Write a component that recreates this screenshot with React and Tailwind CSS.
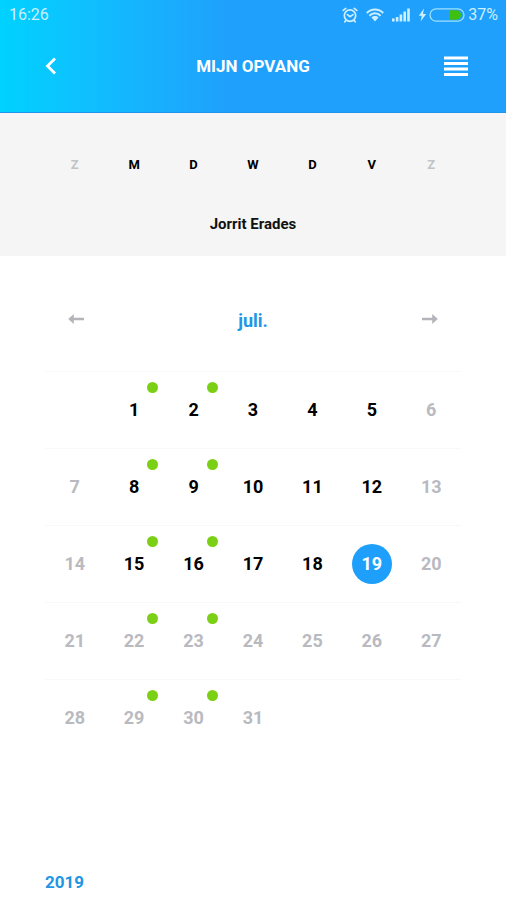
import React, { useState } from "react";

const weekDays = ["Z", "M", "D", "W", "D", "V", "Z"];

const weeks = [
  [null, 1, 2, 3, 4, 5, 6],
  [7, 8, 9, 10, 11, 12, 13],
  [14, 15, 16, 17, 18, 19, 20],
  [21, 22, 23, 24, 25, 26, 27],
  [28, 29, 30, 31, null, null, null],
];

const careDays = [1, 2, 8, 9, 15, 16, 22, 23, 29, 30];
const lastOpenDay = 19;

const StatusBar = () => {
  return (
    <div className="flex h-[30px] items-center justify-between pr-2 pl-[9px] text-[16px] leading-[30px] text-[#cdefff]">
      <span>16:26</span>
      <div className="flex items-center">
        {/* alarm */}
        <svg className="mr-[8px]" width="16" height="16" viewBox="0 0 16 16" fill="none" stroke="currentColor" strokeWidth="1.7" strokeLinecap="round">
          <circle cx="8" cy="8.6" r="5.7" />
          <path d="M1.200 3.400 3.800 1.400M14.800 3.400 12.200 1.400M5.400 7.600 8 9.600l3-2M3.800 13.600l-1 1.200M12.200 13.600l1 1.200" />
        </svg>
        {/* wifi */}
        <svg className="mr-[8px]" width="18" height="14" viewBox="0 0 18 14" fill="none" stroke="currentColor" strokeWidth="2">
          <path d="M.8 5C5.200.3 12.800.3 17.200 5" />
          <path d="M3.400 7.700c3.100-3.200 8.100-3.200 11.200 0" />
          <path d="M5.500 9.500c2-1.900 5-1.900 7 0L9 13.500z" fill="currentColor" stroke="none" />
        </svg>
        {/* signal */}
        <svg className="mr-[8px]" width="18" height="14" viewBox="0 0 18 14" fill="currentColor">
          <rect x="0" y="10.500" width="2.600" height="3" />
          <rect x="3.800" y="9" width="2.600" height="4.500" />
          <rect x="7.600" y="6.500" width="2.600" height="7" />
          <rect x="11.400" y="3.500" width="2.600" height="10" />
          <rect x="15.200" y="0.500" width="2.600" height="13" />
        </svg>
        {/* battery */}
        <svg className="mr-[2px]" width="9" height="14" viewBox="0 0 9 14" fill="currentColor">
          <path d="M6 .5.800 7.700h3L2.600 13.500 8.200 5.900H5z" />
        </svg>
        <svg className="mr-[3px]" width="36" height="14" viewBox="0 0 36 14">
          <path d="M21 2.300h6.500a4.700 4.700 0 0 1 0 9.400H21z" fill="#3fbf12" />
          <rect x="1" y="0.800" width="34" height="12.400" rx="6.200" fill="none" stroke="#9fe0ff" strokeWidth="1.300" />
        </svg>
        <span>37%</span>
      </div>
    </div>
  );
};

const Header = () => {
  return (
    <header className="border-b border-[#1e94ea] bg-linear-to-r from-[#00d2ff] via-[#1fa0fc] via-45% to-[#1fa0fc]">
      <StatusBar />
      <div className="flex h-[82px] items-start justify-between px-[38px] pt-5">
        <button type="button" aria-label="Terug" className="flex h-8 w-8 items-center justify-start pl-[6px] text-white">
          <svg width="14" height="18" viewBox="0 0 14 18" fill="none" stroke="currentColor" strokeWidth="2.800">
            <path d="M11 1.500 3.500 9l7.500 7.500" />
          </svg>
        </button>
        <h1 className="text-[17px] leading-8 font-bold text-white">MIJN OPVANG</h1>
        <button type="button" aria-label="Menu" className="flex h-8 w-8 items-center justify-end text-white">
          <svg className="shrink-0" width="24" height="22" viewBox="0 0 24 22" fill="currentColor">
            <rect x="0" y="1.500" width="24" height="3" />
            <rect x="0" y="7" width="24" height="3" />
            <rect x="0" y="12.500" width="24" height="3" />
            <rect x="0" y="18" width="24" height="3" />
          </svg>
        </button>
      </div>
    </header>
  );
};

const Arrow = () => (
  <svg width="16" height="12" viewBox="0 0 16 12" fill="currentColor">
    <path d="M0 4.800h10.200V1L15.800 6l-5.600 5V7.200H0z" />
  </svg>
);

const Day = ({ day, weekend, selected, onSelect }) => {
  let color = "text-black";
  if (weekend || day > lastOpenDay) color = "text-[#b9babf]";
  if (selected) color = "bg-[#1e9ffb] text-white";

  return (
    <div className="relative flex justify-center">
      <button
        type="button"
        onClick={() => onSelect(day)}
        className={`h-10 w-10 rounded-full text-[18px] leading-10 font-bold ${color}`}
      >
        {day}
      </button>
      {careDays.includes(day) && (
        <span className="absolute -top-2 left-1/2 ml-[13px] h-[11px] w-[11px] rounded-full bg-[#7bd016]"></span>
      )}
    </div>
  );
};

const App = () => {
  const [selectedDay, setSelectedDay] = useState(19);

  return (
    <div className="flex min-h-screen flex-col bg-white font-['Roboto',sans-serif]">
      <Header />

      <section className="bg-[#f5f5f5] px-[45px] pt-[42px] pb-[22px]">
        <div className="grid grid-cols-7 text-center text-[13px] leading-5 font-bold">
          {weekDays.map((name, index) => (
            <span key={index} className={index === 0 || index === 6 ? "text-[#c2c3c6]" : "text-black"}>
              {name}
            </span>
          ))}
        </div>
        <p className="mt-[39px] text-center text-[15px] leading-5 font-bold text-[#111111]">Jorrit Erades</p>
      </section>

      <main className="px-[45px]">
        <div className="flex h-[115px] items-center justify-between px-[23px] pt-[10px]">
          <button type="button" aria-label="Vorige maand" className="rotate-180 text-[#b4b5ba]">
            <Arrow />
          </button>
          <h2 className="pt-1 text-[18px] leading-6 font-bold text-[#2196e3]">juli.</h2>
          <button type="button" aria-label="Volgende maand" className="text-[#b4b5ba]">
            <Arrow />
          </button>
        </div>

        <table className="w-full table-fixed border-collapse">
          <tbody>
            {weeks.map((week, row) => (
              <tr key={row} className="h-[77px] border-t border-[#f8f8f8]">
                {week.map((day, col) => (
                  <td key={col} className="p-0 align-middle">
                    {day && (
                      <Day
                        day={day}
                        weekend={col === 0 || col === 6}
                        selected={day === selectedDay}
                        onSelect={setSelectedDay}
                      />
                    )}
                  </td>
                ))}
              </tr>
            ))}
          </tbody>
        </table>
      </main>

      <footer className="mt-auto px-[45px] pb-[5px]">
        <button type="button" className="text-[17px] leading-6 font-bold text-[#2196e3]">2019</button>
      </footer>
    </div>
  );
};

export default App;
